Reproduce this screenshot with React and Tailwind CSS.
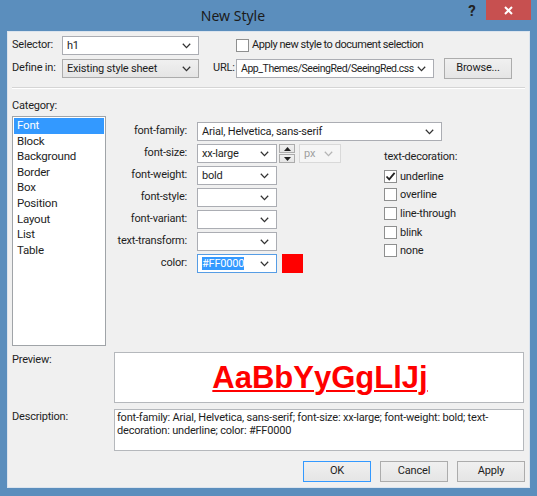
import React from "react";
import clsx from "clsx";

const Chevron = ({ color = "#333" }) => (
  <svg width="9" height="6" viewBox="0 0 9 6" className="shrink-0">
    <path d="M0.8 0.8 L4.5 4.6 L8.2 0.8" fill="none" stroke={color} strokeWidth="1.3" />
  </svg>
);

const Combo = ({ children, w, grey, focus, disabled, className }) => (
  <div
    className={clsx(
      "flex items-center h-[19px] border pr-[7px] box-border",
      grey && "bg-gradient-to-b from-[#f0f0f0] to-[#e5e5e5] border-[#acacac]",
      !grey && !focus && !disabled && "bg-white border-[#abadb3]",
      focus && "bg-white border-[#569de5]",
      disabled && "bg-[#f5f5f5] border-[#d9d9d9] text-[#a0a0a0]",
      className
    )}
    style={{ width: w }}
  >
    <div className="flex-1 pl-[4px] overflow-hidden whitespace-nowrap leading-[15px]">{children}</div>
    <Chevron color={disabled ? "#b5b5b5" : "#333"} />
  </div>
);

const Check = ({ checked }) => (
  <div className="w-[13px] h-[13px] border border-[#8e8f8f] bg-white flex items-center justify-center shrink-0">
    {checked && (
      <svg width="11" height="11" viewBox="0 0 11 11">
        <path d="M1.5 5.5 L4.2 8.3 L9.6 1.8" fill="none" stroke="#222" strokeWidth="1.8" />
      </svg>
    )}
  </div>
);

const Button = ({ children, isDefault }) => (
  <div
    className={clsx(
      "w-[68px] h-[21px] flex items-center justify-center border bg-gradient-to-b from-[#f0f0f0] to-[#e5e5e5]",
      isDefault ? "border-[#3399ff]" : "border-[#acacac]"
    )}
  >
    {children}
  </div>
);

const FormRow = ({ label, children }) => (
  <div className="flex items-center h-[19px]">
    <div className="w-[81px] text-right">{label}</div>
    <div className="w-[10px]" />
    <div className="flex items-center">{children}</div>
  </div>
);

export default function App() {
  const categories = ["Font", "Block", "Background", "Border", "Box", "Position", "Layout", "List", "Table"];
  const decos = [
    ["underline", true],
    ["overline", false],
    ["line-through", false],
    ["blink", false],
    ["none", false],
  ];
  return (
    <div className="w-[537px] h-[496px] bg-[#5b8ebd] flex flex-col font-['Roboto',sans-serif] text-[11px] tracking-[-0.2px] text-[#1e1e1e] overflow-hidden">
      {/* title bar */}
      <div className="h-[31px] flex items-start shrink-0">
        <div className="flex-1 h-[31px] flex items-center justify-center pl-[4px] font-['Noto_Sans',sans-serif] tracking-normal text-[14px] text-[#1b1b1b]">
          New Style
        </div>
        <div className="w-[20px] h-[22px] flex items-center justify-center text-[15px] font-bold text-[#222] mr-[4px]">?</div>
        <div className="w-[45px] h-[20px] bg-[#c75050] flex items-center justify-center mr-[6px]">
          <svg width="9" height="9" viewBox="0 0 9 9">
            <path d="M1 1 L8 8 M8 1 L1 8" stroke="#fff" strokeWidth="2" />
          </svg>
        </div>
      </div>

      {/* client area */}
      <div className="mx-[7px] h-[457px] bg-[#f0f0f0] border border-[#dbe4ee] box-border px-[4px] flex flex-col">
        {/* row 1 */}
        <div className="flex items-center h-[19px] mt-[4px]">
          <div className="w-[50px]">Selector:</div>
          <Combo w={137}>h1</Combo>
          <div className="w-[37px]" />
          <Check />
          <div className="ml-[3px] tracking-[-0.45px]">Apply new style to document selection</div>
        </div>
        {/* row 2 */}
        <div className="flex items-center h-[21px] mt-[3px]">
          <div className="w-[50px]">Define in:</div>
          <Combo w={137} grey>
            Existing style sheet
          </Combo>
          <div className="w-[14px]" />
          <div className="w-[23px]">URL:</div>
          <Combo w={198} className="pr-[5px]">
            <span className="text-[10.5px] tracking-[-0.45px]">App_Themes/SeeingRed/SeeingRed.css</span>
          </Combo>
          <div className="w-[10px]" />
          <Button>Browse...</Button>
        </div>
        {/* separator */}
        <div className="mt-[8px] border-t border-[#d5d5d5] border-b border-b-white" />

        <div className="mt-[9px] leading-[15px]">Category:</div>

        {/* middle */}
        <div className="flex mt-[3px]">
          <div className="w-[94px] h-[230px] border border-[#a0a4a8] bg-white p-[1px] box-border">
            {categories.map((c, i) => (
              <div
                key={c}
                className={clsx(
                  "h-[15.6px] leading-[15.6px] pl-[3px] text-[11.5px]",
                  i === 0 && "bg-[#3399ff] text-white"
                )}
              >
                {c}
              </div>
            ))}
          </div>

          <div className="flex flex-col pt-[6px]">
            <FormRow label="font-family:">
              <Combo w={245}>Arial, Helvetica, sans-serif</Combo>
            </FormRow>
            <div className="flex mt-[3px]">
              <div className="w-[241px] flex flex-col gap-[3px]">
                <FormRow label="font-size:">
                  <Combo w={80}>xx-large</Combo>
                  <div className="ml-[2px] w-[16px] h-[19px] flex flex-col gap-[1px]">
                    <div className="flex-1 border border-[#acacac] bg-gradient-to-b from-[#f0f0f0] to-[#e5e5e5] flex items-center justify-center">
                      <svg width="7" height="4" viewBox="0 0 7 4">
                        <path d="M0 4 L3.5 0 L7 4 Z" fill="#222" />
                      </svg>
                    </div>
                    <div className="flex-1 border border-[#acacac] bg-gradient-to-b from-[#f0f0f0] to-[#e5e5e5] flex items-center justify-center">
                      <svg width="7" height="4" viewBox="0 0 7 4">
                        <path d="M0 0 L3.5 4 L7 0 Z" fill="#222" />
                      </svg>
                    </div>
                  </div>
                  <Combo w={42} disabled className="ml-[4px] h-[17px]">
                    px
                  </Combo>
                </FormRow>
                <FormRow label="font-weight:">
                  <Combo w={80}>bold</Combo>
                </FormRow>
                <FormRow label="font-style:">
                  <Combo w={80} />
                </FormRow>
                <FormRow label="font-variant:">
                  <Combo w={80} />
                </FormRow>
                <FormRow label="text-transform:">
                  <Combo w={80} />
                </FormRow>
                <FormRow label="color:">
                  <Combo w={80} focus>
                    <span className="bg-[#3399ff] text-white">#FF0000</span>
                  </Combo>
                  <div className="ml-[5px] w-[21px] h-[19px] bg-[#ff0000]" />
                </FormRow>
              </div>
              <div className="ml-[37px] flex flex-col pt-[5px]">
                <div className="leading-[15px]">text-decoration:</div>
                <div className="mt-[3px] flex flex-col">
                  {decos.map(([d, c]) => (
                    <div key={d} className="flex items-center h-[18.6px]">
                      <Check checked={c} />
                      <div className="ml-[3px] leading-[13px]">{d}</div>
                    </div>
                  ))}
                </div>
              </div>
            </div>
          </div>
        </div>

        {/* preview */}
        <div className="flex mt-[6px]">
          <div className="w-[102px] leading-[15px]">Preview:</div>
          <div className="w-[410px] h-[51px] border border-[#b5b8bc] bg-white flex items-center justify-center">
            <span className="font-['Liberation_Sans',Arial,sans-serif] tracking-normal font-bold text-[31px] text-[#ff0000] underline decoration-[2px] underline-offset-[2px] leading-none pl-[2px]">
              AaBbYyGgLlJj
            </span>
          </div>
        </div>

        {/* description */}
        <div className="flex mt-[6px]">
          <div className="w-[102px] leading-[15px]">Description:</div>
          <div className="w-[410px] h-[42px] border border-[#b5b8bc] bg-white pl-[2px] pt-[2px] leading-[12.5px]">
            <div className="whitespace-nowrap">
              font-family: Arial, Helvetica, sans-serif; font-size: xx-large; font-weight: bold; text-
            </div>
            <div className="whitespace-nowrap">decoration: underline; color: #FF0000</div>
          </div>
        </div>

        {/* buttons */}
        <div className="flex justify-end gap-[9px] mt-[10px]">
          <Button isDefault>OK</Button>
          <Button>Cancel</Button>
          <Button>Apply</Button>
        </div>
      </div>
    </div>
  );
}
